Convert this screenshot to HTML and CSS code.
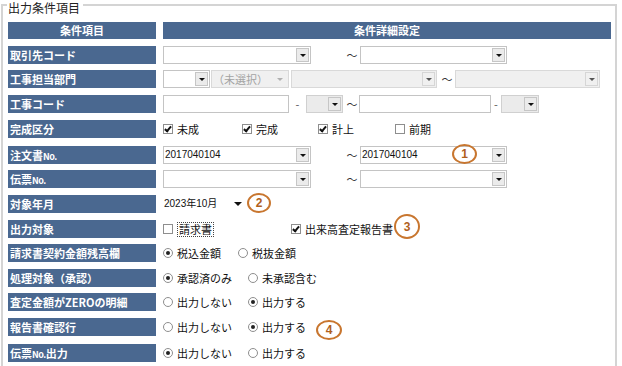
FILE: index.html
```html
<!DOCTYPE html>
<html lang="ja">
<head>
  <meta charset="UTF-8">
  <title>出力条件項目</title>
  <link rel="stylesheet" href="styles.css">
</head>
<body>
  <div class="page">
    <div class="frame-title">
      <span class="corner"></span>
      <span class="title">出力条件項目</span>
      <span class="rule"></span>
    </div>
    <div class="frame-body">
      <div class="row head h24">
        <div class="lbl">条件項目</div>
        <div class="hval">条件詳細設定</div>
      </div>

      <div class="row h24">
        <div class="lbl">取引先コード</div>
        <div class="val">
          <div class="sel w148"><span class="txt"></span><span class="arw"></span></div>
          <span class="tilde ml34">〜</span>
          <div class="sel w147 ml1"><span class="txt"></span><span class="arw"></span></div>
        </div>
      </div>

      <div class="row">
        <div class="lbl">工事担当部門</div>
        <div class="val">
          <div class="sel w47"><span class="txt"></span><span class="arw"></span></div>
          <div class="sel dis w78 ml1"><span class="txt">（未選択）</span><span class="arw bare"></span></div>
          <div class="sel dis w146 ml2"><span class="txt"></span><span class="arw"></span></div>
          <span class="tilde ml3">〜</span>
          <div class="sel dis w145 ml1"><span class="txt"></span><span class="arw"></span></div>
        </div>
      </div>

      <div class="row">
        <div class="lbl">工事コード</div>
        <div class="val">
          <div class="inp w126"></div>
          <span class="dash w17">-</span>
          <div class="sel grey w37"><span class="txt"></span><span class="arw"></span></div>
          <span class="tilde ml2">〜</span>
          <div class="inp w132"></div>
          <span class="dash w10">-</span>
          <div class="sel grey w38"><span class="txt"></span><span class="arw"></span></div>
        </div>
      </div>

      <div class="row h26">
        <div class="lbl">完成区分</div>
        <div class="val opts c4">
          <span class="opt"><span class="cb on"></span>未成</span>
          <span class="opt"><span class="cb on"></span>完成</span>
          <span class="opt"><span class="cb on"></span>計上</span>
          <span class="opt"><span class="cb"></span>前期</span>
        </div>
      </div>

      <div class="row h24">
        <div class="lbl">注文書<span class="no">No.</span></div>
        <div class="val">
          <div class="sel w148"><span class="txt num">2017040104</span><span class="arw"></span></div>
          <span class="tilde ml34">〜</span>
          <div class="sel w147 ml1"><span class="txt num">2017040104</span><span class="arw"></span></div>
        </div>
      </div>

      <div class="row">
        <div class="lbl">伝票<span class="no">No.</span></div>
        <div class="val">
          <div class="sel w148"><span class="txt"></span><span class="arw"></span></div>
          <span class="tilde ml34">〜</span>
          <div class="sel w147 ml1"><span class="txt"></span><span class="arw"></span></div>
        </div>
      </div>

      <div class="row">
        <div class="lbl">対象年月</div>
        <div class="val">
          <div class="sel plain w84"><span class="txt num">2023年10月</span><span class="arw bare dark"></span></div>
        </div>
      </div>

      <div class="row h24">
        <div class="lbl">出力対象</div>
        <div class="val opts c2a">
          <span class="opt"><span class="cb"></span><span class="focus">請求書</span></span>
          <span class="opt"><span class="cb on"></span>出来高査定報告書</span>
        </div>
      </div>

      <div class="row">
        <div class="lbl">請求書契約金額残高欄</div>
        <div class="val opts c2b">
          <span class="opt"><span class="rb on"></span>税込金額</span>
          <span class="opt"><span class="rb"></span>税抜金額</span>
        </div>
      </div>

      <div class="row h24">
        <div class="lbl">処理対象（承認）</div>
        <div class="val opts c2c">
          <span class="opt"><span class="rb on"></span>承認済のみ</span>
          <span class="opt"><span class="rb"></span>未承認含む</span>
        </div>
      </div>

      <div class="row">
        <div class="lbl">査定金額がZEROの明細</div>
        <div class="val opts c2c">
          <span class="opt"><span class="rb"></span>出力しない</span>
          <span class="opt"><span class="rb on"></span>出力する</span>
        </div>
      </div>

      <div class="row h26">
        <div class="lbl">報告書確認行</div>
        <div class="val opts c2c">
          <span class="opt"><span class="rb"></span>出力しない</span>
          <span class="opt"><span class="rb on"></span>出力する</span>
        </div>
      </div>

      <div class="row">
        <div class="lbl">伝票<span class="no">No.</span>出力</div>
        <div class="val opts c2c">
          <span class="opt"><span class="rb on"></span>出力しない</span>
          <span class="opt"><span class="rb"></span>出力する</span>
        </div>
      </div>
    </div>

    <!-- annotation marks -->
    <span class="mark m1">1</span>
    <span class="mark m2">2</span>
    <span class="mark m3">3</span>
    <span class="mark m4">4</span>
  </div>
</body>
</html>
```

FILE: styles.css
```css
body { margin: 0; background: #fff; color: #111; font-family: "Noto Sans CJK JP", "Liberation Sans", sans-serif; font-size: 11px; }
.page { position: relative; height: 366px; padding: 0 5px 0 1px; overflow: hidden; }

/* group frame */
.frame-title { display: flex; height: 16px; }
.corner { width: 4px; margin-top: 4px; border-top: 2px solid #d4d4d4; border-left: 2px solid #d4d4d4; }
.title { padding: 0 3px 0 1px; font-size: 12px; line-height: 16px; color: #222; }
.rule { flex: 1; margin-top: 4px; border-top: 2px solid #d4d4d4; border-right: 2px solid #d4d4d4; }
.frame-body { border-left: 2px solid #d4d4d4; border-right: 2px solid #d4d4d4; padding: 6px 4px 40px 5px; }

/* rows */
.row { display: flex; height: 25px; }
.row.h24 { height: 24px; }
.row.h26 { height: 26px; }
.lbl {
  width: 148px; height: 18px; box-sizing: border-box; padding-left: 2px;
  background: #4a6890; color: #fff; font-weight: bold; line-height: 18px; white-space: nowrap; flex: none;
}
.lbl .no { font-size: 9px; letter-spacing: -0.5px; }
.hval { flex: 1; margin-left: 7px; background: #4a6890; color: #fff; font-weight: bold; }
.head .lbl, .head .hval { height: 17px; line-height: 17px; text-align: center; padding-left: 0; }
.val { flex: 1; margin-left: 7px; height: 18px; display: flex; align-items: center; white-space: nowrap; }

/* selects / inputs */
.sel { display: flex; align-items: center; height: 18px; box-sizing: border-box; border: 1px solid #c4c4c4; background: #fff; flex: none; }
.sel .txt { flex: 1; padding-left: 1px; line-height: 16px; overflow: hidden; }
.arw {
  width: 13px; height: 14px; box-sizing: border-box; margin-right: 1px;
  border: 1px solid #c6c6c6; background: #ebebeb;
  display: flex; align-items: center; justify-content: center; flex: none;
}
.arw::after { content: ""; border-left: 3px solid transparent; border-right: 3px solid transparent; border-top: 3px solid #111; }
.arw.bare { border-color: transparent; background: none; margin-right: 2px; }
.arw.bare::after { border-top-color: #a8a8a8; }
.arw.bare.dark::after { border-left-width: 4px; border-right-width: 4px; border-top: 4px solid #111; }
.sel.dis { background: #f0f0f0; border-color: #d9d9d9; color: #a3a3a3; }
.sel.dis .arw { background: #f0f0f0; border-color: #d6d6d6; }
.sel.dis .arw::after { border-top-color: #555; }
.sel.dis .arw.bare { background: none; border-color: transparent; }
.sel.dis .arw.bare::after { border-top-color: #b0b0b0; }
.sel.grey { background: #ebebeb; border-color: #d0d0d0; }
.sel.plain { border-color: transparent; }
.sel.plain .txt { padding-left: 0; }
.inp { height: 18px; box-sizing: border-box; border: 1px solid #c4c4c4; background: #fff; flex: none; }
.num { font-family: "Liberation Sans", "Noto Sans CJK JP", sans-serif; font-size: 10px; }

.w37 { width: 37px; } .w38 { width: 38px; } .w47 { width: 47px; } .w78 { width: 78px; }
.w84 { width: 84px; } .w126 { width: 126px; } .w132 { width: 132px; } .w145 { width: 145px; }
.w146 { width: 146px; } .w147 { width: 147px; } .w148 { width: 148px; }
.ml1 { margin-left: 1px; } .ml2 { margin-left: 2px; } .ml3 { margin-left: 3px; } .ml34 { margin-left: 34px; }
.tilde { width: 14px; text-align: center; color: #333; flex: none; }
.dash { text-align: center; color: #555; flex: none; }
.dash.w17 { width: 17px; } .dash.w10 { width: 10px; }

/* checkboxes / radios */
.opts { display: grid; align-items: center; }
.opts.c4 { grid-template-columns: 79px 76px 77px auto; }
.opts.c2a { grid-template-columns: 128px auto; }
.opts.c2b { grid-template-columns: 75px auto; }
.opts.c2c { grid-template-columns: 85px auto; }
.opt { display: flex; align-items: center; }
.cb, .rb {
  width: 10px; height: 10px; box-sizing: border-box; margin-right: 4px; flex: none;
  border: 1px solid #8e8e8e; background: #fff; display: flex; align-items: center; justify-content: center;
}
.rb { border-radius: 50%; }
.rb.on::after { content: ""; width: 4px; height: 4px; border-radius: 50%; background: #222; }
.cb.on::after { content: ""; width: 2px; height: 5px; margin-top: -2px; border: solid #111; border-width: 0 2px 2px 0; transform: rotate(40deg); }
.focus { border: 1px dotted #444; padding: 0 1px; line-height: 13px; }

/* numbered marks */
.mark {
  position: absolute; box-sizing: border-box; border: 2px solid #c8762f; border-radius: 50%;
  color: #b0601c; font: bold 12px "Liberation Sans", sans-serif;
  display: flex; align-items: center; justify-content: center;
}
.m1 { left: 452px; top: 144px; width: 25px; height: 20px; }
.m2 { left: 247px; top: 193px; width: 24px; height: 20px; }
.m3 { left: 394px; top: 214px; width: 26px; height: 25px; }
.m4 { left: 316px; top: 320px; width: 26px; height: 20px; }
```
